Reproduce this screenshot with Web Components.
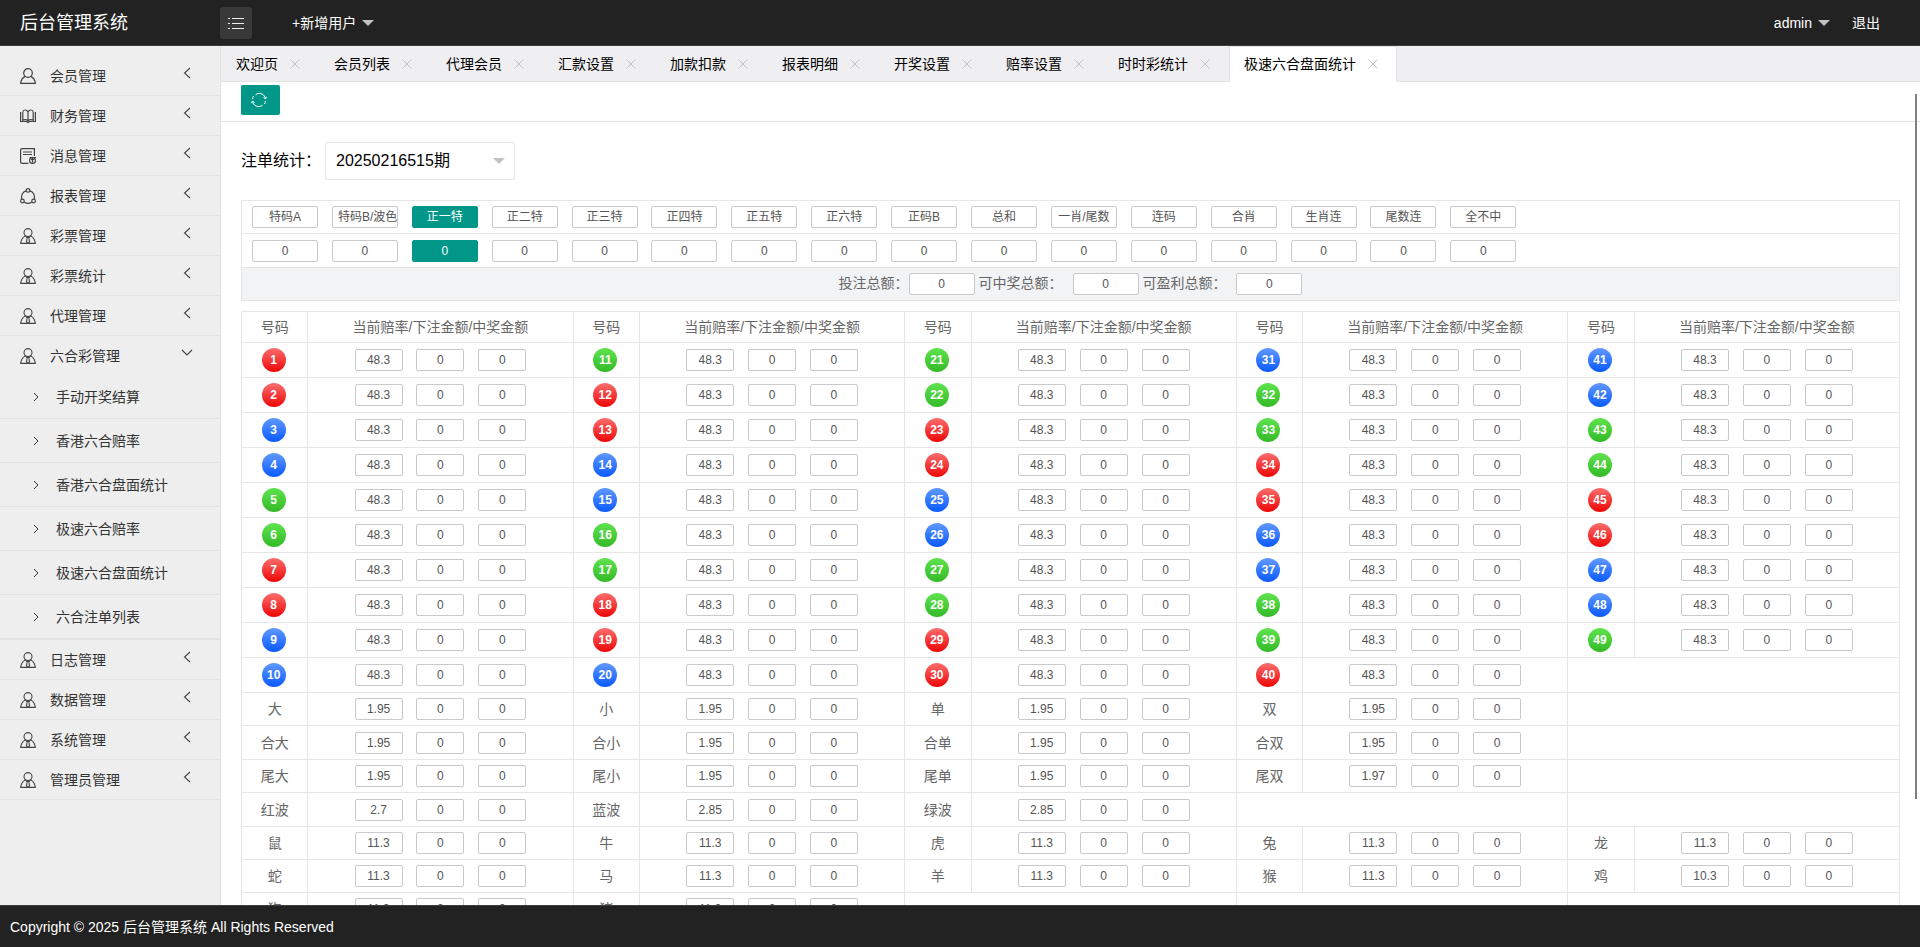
<!DOCTYPE html>
<html lang="zh-CN">
<head>
<meta charset="utf-8">
<title>后台管理系统</title>
<style>
html, body { margin: 0; height: 100%; }
body { font: 14px/20px "Liberation Sans", "Noto Sans CJK SC", sans-serif; color: #000; overflow: hidden; background: #fff; }
</style>
</head>
<body>
<admin-app></admin-app>
<script>
const define = (name, render) => customElements.define(name, class extends HTMLElement {
  constructor() {
    super();
    this.attachShadow({ mode: 'open' });
  }
  connectedCallback() {
    if (!this.shadowRoot.firstChild) this.shadowRoot.innerHTML = render(this);
  }
});

const svg = (w, h, body, sw = 1) =>
  `<svg width="${w}" height="${h}" viewBox="0 0 ${w} ${h}" fill="none" stroke="currentColor" stroke-width="${sw}" aria-hidden="true">${body}</svg>`;
const icons = {
  user: svg(16, 16, '<circle cx="8" cy="5" r="4.3"/><path d="M5.2 8.4C2.4 9.8.9 12 .7 15.4h14.6c-.2-3.4-1.7-5.6-4.5-7"/>', 1.2),
  agent: svg(16, 16, '<circle cx="8" cy="4.6" r="4"/><path d="M5.4 7.6C2.4 9.6.9 12 .7 15.4h14.6c-.2-3.4-1.7-5.8-4.7-7.8M7.2 9.2h1.6l.7 4.6L8 15.4l-1.5-1.6zM5.4 7.8l2 2.4M10.6 7.8l-2 2.4"/>', 1.1),
  book: svg(16, 16, '<path d="M8 4C7.300 2.500 6.300 2 5.200 2 4 2 3 2.700 2.800 4v8.200c1.700-.8 3.900-.6 5.200.6 1.300-1.200 3.500-1.400 5.200-.6V4c-.2-1.300-1.200-2-2.400-2C9.700 2 8.700 2.500 8 4zM8 4v9.500M.6 4v9.500h5.800L8 14.500l1.600-1h5.800V4"/>', 1.2),
  note: svg(16, 16, '<path d="M8.500 15.400H2A1.400 1.400 0 0 1 .6 14V2A1.400 1.400 0 0 1 2 .6h12.400V8M3 4h9M3 6.500h9"/><circle cx="12.500" cy="12.500" r="2.900"/><path d="M9.500 9.500h6.500M12.500 9.500v5M11 11.500h3"/>', 1.2),
  share: svg(16, 16, '<circle cx="8" cy="2.400" r="1.800"/><circle cx="2.400" cy="13" r="1.800"/><circle cx="13.600" cy="13" r="1.800"/><path d="M6 2.900C2.600 3.900.9 7.500 1.800 11M10 2.900c3.400 1 5.100 4.600 4.200 8.100M4.200 13.900c2.400 1.800 5.200 1.800 7.600 0"/>', 1.2),
  left: svg(8, 12, '<path d="M7 1 1.500 6 7 11"/>', 1.1),
  down: svg(12, 8, '<path d="M1 1l5 5 5-5"/>', 1.1),
  right: svg(6, 10, '<path d="M1 1l4 4-4 4"/>'),
  close: svg(10, 10, '<path d="M.5.5l9 9M9.500.5l-9 9"/>'),
  list: svg(16, 12, '<path d="M4 1.500h12M4 6.500h12M4 11.500h12M0 1.500h2M0 6.500h2M0 11.500h2"/>'),
  caret: '<svg width="12" height="6" viewBox="0 0 12 6" fill="currentColor" aria-hidden="true"><path d="M0 0h12L6 6z"/></svg>',
  refresh: svg(16, 16, '<path d="M4.500 2.800C6.500 1.300 9 1 11 2c2 1 3.200 2.800 3.500 5M11.500 13.200C9.500 14.700 7 15 5 14c-2-1-3.200-2.800-3.500-5M1.500 7c.1-1.200.5-2.200 1.200-3M14.500 9c-.1 1.200-.5 2.200-1.200 3M12.600 5.200l1.900 1.900 1.100-2.300M3.400 10.800 1.500 8.900.4 11.200"/>')
};

define('admin-header', () => `
<style>
:host { display: flex; align-items: center; height: 45px; background: #222; border-bottom: 1px solid #3d3d3d; color: #fff; }
.brand { width: 200px; padding-left: 20px; font-size: 18px; }
button { display: flex; align-items: center; justify-content: center; width: 32px; height: 32px; margin: 0 40px 0 0; padding: 0; border: 0; border-radius: 3px; background: #393939; color: #eee; }
a { display: flex; align-items: center; gap: 6px; color: inherit; text-decoration: none; }
a svg { color: #c2c2c2; }
nav { display: flex; gap: 22px; margin-left: auto; padding-right: 40px; }
</style>
<div class="brand">后台管理系统</div>
<button type="button" aria-label="折叠菜单">${icons.list}</button>
<a href="#add">+新增用户${icons.caret}</a>
<nav><a href="#admin">admin${icons.caret}</a><a href="#logout">退出</a></nav>`);

define('menu-group', el => {
  const open = el.hasAttribute('open');
  return `
<style>
:host { display: block; border-bottom: 1px solid #e2e2e2; color: #333; }
a { display: flex; align-items: center; height: 39px; padding: 0 27px 0 20px; color: inherit; text-decoration: none; }
span { flex: 1; margin-left: 14px; }
.arrow { display: flex; justify-content: center; width: 12px; margin-bottom: 5px; }
svg { color: #444; }
</style>
<a href="#group" aria-expanded="${open}">${icons[el.getAttribute('icon')]}<span>${el.getAttribute('label')}</span><i class="arrow">${open ? icons.down : icons.left}</i></a>
<slot></slot>`;
});

define('menu-link', () => `
<style>
:host { display: block; }
a { display: flex; align-items: center; gap: 17px; height: 43px; padding-left: 33px; border-bottom: 1px solid #e2e2e2; color: #333; text-decoration: none; }
</style>
<a href="#page">${icons.right}<slot></slot></a>`);

define('side-menu', () => {
  const groups = [['会员管理', 'user'], ['财务管理', 'book'], ['消息管理', 'note'], ['报表管理', 'share'], ['彩票管理', 'agent'], ['彩票统计', 'agent'], ['代理管理', 'agent'],
    ['六合彩管理', 'agent', ['手动开奖结算', '香港六合赔率', '香港六合盘面统计', '极速六合赔率', '极速六合盘面统计', '六合注单列表']],
    ['日志管理', 'agent'], ['数据管理', 'agent'], ['系统管理', 'agent'], ['管理员管理', 'agent']];
  return `
<style>:host { display: block; box-sizing: border-box; padding-top: 10px; background: #eee; border-right: 1px solid #e2e2e2; overflow: hidden; }</style>
${groups.map(([label, icon, links]) => `<menu-group label="${label}" icon="${icon}"${links ? ' open' : ''}>${(links || []).map(t => `<menu-link>${t}</menu-link>`).join('')}</menu-group>`).join('')}`;
});

define('page-tab', () => `
<style>
:host { display: flex; align-items: center; box-sizing: border-box; height: 36px; padding: 0 15px; border-bottom: 1px solid #e2e2e2; }
:host([active]) { padding: 0 14px; background: #fff; border: 1px solid #e2e2e2; border-bottom-color: #fff; }
a { color: #000; text-decoration: none; }
button { display: flex; align-items: center; justify-content: center; width: 18px; height: 18px; margin: 0 0 0 8px; padding: 0; border: 0; background: none; color: #c2c2c2; }
</style>
<a href="#tab"><slot></slot></a><button type="button" aria-label="关闭">${icons.close}</button>`);

define('tab-strip', () => `
<style>
:host { display: flex; background: #efeef0; }
.rest { flex: 1; border-bottom: 1px solid #e2e2e2; }
</style>
${['欢迎页', '会员列表', '代理会员', '汇款设置', '加款扣款', '报表明细', '开奖设置', '赔率设置', '时时彩统计'].map(t => `<page-tab>${t}</page-tab>`).join('')}<page-tab active>极速六合盘面统计</page-tab><div class="rest"></div>`);

define('tool-bar', () => `
<style>
:host { display: flex; align-items: flex-start; box-sizing: border-box; height: 40px; padding: 3px 20px 0; border-bottom: 1px solid #e2e2e2; }
button { display: flex; align-items: center; justify-content: center; width: 39px; height: 30px; margin: 0; padding: 0 3px 0 0; border: 0; border-radius: 2px; background: #009688; color: #fff; }
</style>
<button type="button" aria-label="刷新">${icons.refresh}</button>`);

define('period-picker', () => `
<style>
:host { display: flex; align-items: center; gap: 4px; font-size: 16px; }
.box { position: relative; }
select { appearance: none; width: 190px; height: 38px; margin: 0; padding: 0 10px; border: 1px solid #e6e6e6; border-radius: 2px; background: #fff; color: #000; font: inherit; }
svg { position: absolute; right: 10px; top: 16px; color: #c2c2c2; pointer-events: none; }
</style>
<label for="period">注单统计：</label>
<div class="box"><select id="period"><option>20250216515期</option></select>${icons.caret}</div>`);

const chipCss = `
table { width: 100%; border-collapse: collapse; table-layout: fixed; color: #666; }
button { box-sizing: border-box; height: 22px; margin: 0; padding: 0 5px; border: 1px solid #c9c9c9; border-radius: 2px; background: #fff; color: #555; font: 12px/20px "Liberation Sans", "Noto Sans CJK SC", sans-serif; text-align: center; white-space: nowrap; overflow: hidden; vertical-align: middle; }
button + button { margin-left: 10px; }
td, th { border: 1px solid #e6e6e6; font-weight: 400; }`;

define('bet-summary', () => {
  const names = ['特码A', '特码B/波色', '正一特', '正二特', '正三特', '正四特', '正五特', '正六特', '正码B', '总和', '一肖/尾数', '连码', '合肖', '生肖连', '尾数连', '全不中'];
  const chip = (t, i) => `<button type="button"${i === 2 ? ' class="on"' : ''}>${t}</button>`;
  return `
<style>
:host { display: block; }
${chipCss}
button { width: 66px; }
.on { background: #009688; border-color: #009688; color: #fff; }
td { height: 32px; padding: 0 10px; white-space: nowrap; }
.amounts td { height: 33px; }
.totals td { background: #f2f3f5; text-align: center; }
label + button { margin-left: 0; }
label ~ label + button { margin-left: 10px; }
</style>
<table>
<tr><td>${names.map(chip).join(' ')}</td></tr>
<tr class="amounts"><td>${names.map((n, i) => chip('0', i)).join(' ')}</td></tr>
<tr class="totals"><td><label for="bet">投注总额：</label><button type="button" id="bet">0</button> <label for="win">可中奖总额：</label><button type="button" id="win">0</button> <label for="profit">可盈利总额：</label><button type="button" id="profit">0</button></td></tr>
</table>`;
});

define('lottery-ball', () => `
<style>
:host { display: block; width: 24px; height: 24px; margin: 0 auto; border-radius: 50%; color: #fff; font-size: 12px; font-weight: 700; line-height: 24px; text-align: center; }
:host([tone="r"]) { background: linear-gradient(#fc6e6e, #ee0606); }
:host([tone="b"]) { background: linear-gradient(#6199ff, #0a59ff); }
:host([tone="g"]) { background: linear-gradient(#5fe34e, #34ba27); }
</style><slot></slot>`);

define('odds-table', () => {
  const tones = 'rrbbggrrbbgrrbbggrrbggrrbbggrrbggrrbbggrbbggrrbbg';
  const chips = odds => `<td>${[odds, '0', '0'].map(v => `<button type="button">${v}</button>`).join(' ')}</td>`;
  const blank = '<td colspan="2"></td>';
  const rows = Array.from({ length: 10 }, (_, r) => '<tr class="num">' + [0, 1, 2, 3, 4].map(c => {
    const n = c * 10 + r + 1;
    return n > 49 ? blank : `<td class="ball"><lottery-ball tone="${tones[n - 1]}">${n}</lottery-ball></td>${chips('48.3')}`;
  }).join('') + '</tr>');
  const extra = [
    ['大 1.95', '小 1.95', '单 1.95', '双 1.95'],
    ['合大 1.95', '合小 1.95', '合单 1.95', '合双 1.95'],
    ['尾大 1.95', '尾小 1.95', '尾单 1.95', '尾双 1.97'],
    ['红波 2.7', '蓝波 2.85', '绿波 2.85'],
    ['鼠 11.3', '牛 11.3', '虎 11.3', '兔 11.3', '龙 11.3'],
    ['蛇 11.3', '马 11.3', '羊 11.3', '猴 11.3', '鸡 10.3'],
    ['狗 11.3', '猪 11.3']
  ].map(row => '<tr class="kind">' + [0, 1, 2, 3, 4].map(c => {
    if (!row[c]) return blank;
    const [name, odds] = row[c].split(' ');
    return `<td>${name}</td>${chips(odds)}`;
  }).join('') + '</tr>');
  return `
<style>
:host { display: block; }
${chipCss}
button { width: 48px; }
td, th { padding: 0; text-align: center; height: 32px; white-space: nowrap; }
th { height: 30px; }
.num td { height: 34px; }
.num .ball { padding-right: 2px; }
.kind:nth-child(even):nth-child(-n+14) td { height: 33px; }
.no { width: 4%; }
.data { width: 16%; }
</style>
<table>
<colgroup>${'<col class="no"><col class="data">'.repeat(5)}</colgroup>
<thead><tr>${'<th scope="col">号码</th><th scope="col">当前赔率/下注金额/中奖金额</th>'.repeat(5)}</tr></thead>
<tbody>${rows.join('')}${extra.join('')}</tbody>
</table>`;
});

define('page-content', () => `
<style>
:host { display: block; position: relative; min-height: 0; overflow: hidden; }
.body { display: grid; gap: 20px; padding: 20px; }
.tables { display: grid; gap: 10px; }
.thumb { position: absolute; right: 3px; top: 12px; bottom: 106px; width: 2px; background: #808080; }
</style>
<tool-bar></tool-bar>
<div class="body"><period-picker></period-picker><div class="tables"><bet-summary></bet-summary><odds-table></odds-table></div></div>
<div class="thumb"></div>`);

define('admin-footer', () => `
<style>:host { display: flex; align-items: center; height: 41px; padding: 0 10px; background: #222; border-top: 1px solid #3d3d3d; color: #fff; }</style>
<slot></slot>`);

define('admin-app', () => `
<style>
:host { display: grid; grid-template-rows: auto minmax(0, 1fr) auto; height: 100vh; }
.main { display: grid; grid-template-columns: 221px minmax(0, 1fr); min-height: 0; }
.pane { display: grid; grid-template-rows: auto minmax(0, 1fr); min-height: 0; }
</style>
<admin-header></admin-header>
<div class="main"><side-menu></side-menu><div class="pane"><tab-strip></tab-strip><page-content></page-content></div></div>
<admin-footer>Copyright © 2025 后台管理系统 All Rights Reserved</admin-footer>`);
</script>
</body>
</html>
